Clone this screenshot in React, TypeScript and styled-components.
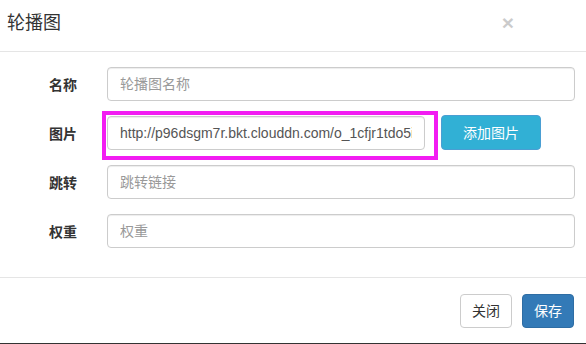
import styled, { createGlobalStyle } from "styled-components";

const GlobalStyle = createGlobalStyle`
  html, body {
    margin: 0;
    padding: 0;
    background: #fff;
  }
  body {
    font-family: "Liberation Sans", "Noto Sans CJK SC", sans-serif;
    font-size: 14px;
    color: #333;
  }
  * {
    box-sizing: border-box;
  }
`;

const Modal = styled.div`
  width: 586px;
  height: 344px;
  background: #fff;
  border-bottom: 1px solid #333;
  display: flex;
  flex-direction: column;
`;

const Header = styled.div`
  height: 52px;
  padding: 0 72px 6px 7px;
  border-bottom: 1px solid #e5e5e5;
  display: flex;
  align-items: center;
  justify-content: space-between;
`;

const Title = styled.h4`
  margin: 0;
  font-size: 18px;
  font-weight: normal;
  line-height: 26px;
  color: #333;
`;

const Close = styled.button`
  border: 0;
  background: none;
  padding: 0;
  font-family: "Liberation Sans", sans-serif;
  font-size: 21px;
  font-weight: bold;
  line-height: 1;
  color: #000;
  opacity: 0.2;
  cursor: pointer;
`;

const Body = styled.form`
  padding: 15px 11px 14px 0;
  display: grid;
  grid-template-columns: 77px 1fr;
  column-gap: 30px;
  row-gap: 15px;
  align-items: center;
`;

const Label = styled.label`
  text-align: right;
  font-weight: bold;
  color: #333;
`;

const Input = styled.input`
  width: 100%;
  height: 34px;
  padding: 6px 12px;
  border: 1px solid #ccc;
  border-radius: 4px;
  font-family: inherit;
  font-size: 14px;
  color: #555;
  box-shadow: inset 0 1px 1px rgba(0, 0, 0, 0.075);
  &::placeholder {
    color: #999;
  }
`;

const PicRow = styled.div`
  height: 34px;
  display: flex;
  align-items: center;
  gap: 16px;
`;

const Highlight = styled.div`
  position: relative;
  width: 318px;
  &::after {
    content: "";
    position: absolute;
    left: -5px;
    top: -5px;
    right: -13px;
    bottom: -10px;
    border: 4px solid #f21cf2;
    pointer-events: none;
  }
`;

const Button = styled.button<{ $variant: "info" | "primary" | "default" }>`
  height: 34px;
  padding: 6px 11px;
  border-radius: 4px;
  font-family: inherit;
  font-size: 14px;
  line-height: 20px;
  cursor: pointer;
  border: 1px solid
    ${p => (p.$variant === "info" ? "#4a9ed3" : p.$variant === "primary" ? "#2e6da4" : "#ccc")};
  background: ${p => (p.$variant === "info" ? "#31b0d5" : p.$variant === "primary" ? "#337ab7" : "#fff")};
  color: ${p => (p.$variant === "default" ? "#333" : "#fff")};
`;

const AddButton = styled(Button)`
  width: 100px;
  height: 35px;
  margin-top: -1px;
`;

const Footer = styled.div`
  margin-top: auto;
  border-top: 1px solid #e5e5e5;
  padding: 16px 12px 15px;
  display: flex;
  justify-content: flex-end;
  gap: 10px;
`;

export default function App() {
  return (
    <>
      <GlobalStyle />
      <Modal>
        <Header>
          <Title>轮播图</Title>
          <Close type="button">×</Close>
        </Header>
        <Body>
          <Label>名称</Label>
          <Input placeholder="轮播图名称" />
          <Label>图片</Label>
          <PicRow>
            <Highlight>
              <Input defaultValue="http://p96dsgm7r.bkt.clouddn.com/o_1cfjr1tdo5i81k2e1bkl1oj3rq9" />
            </Highlight>
            <AddButton type="button" $variant="info">添加图片</AddButton>
          </PicRow>
          <Label>跳转</Label>
          <Input placeholder="跳转链接" />
          <Label>权重</Label>
          <Input placeholder="权重" />
        </Body>
        <Footer>
          <Button type="button" $variant="default">关闭</Button>
          <Button type="button" $variant="primary">保存</Button>
        </Footer>
      </Modal>
    </>
  );
}
